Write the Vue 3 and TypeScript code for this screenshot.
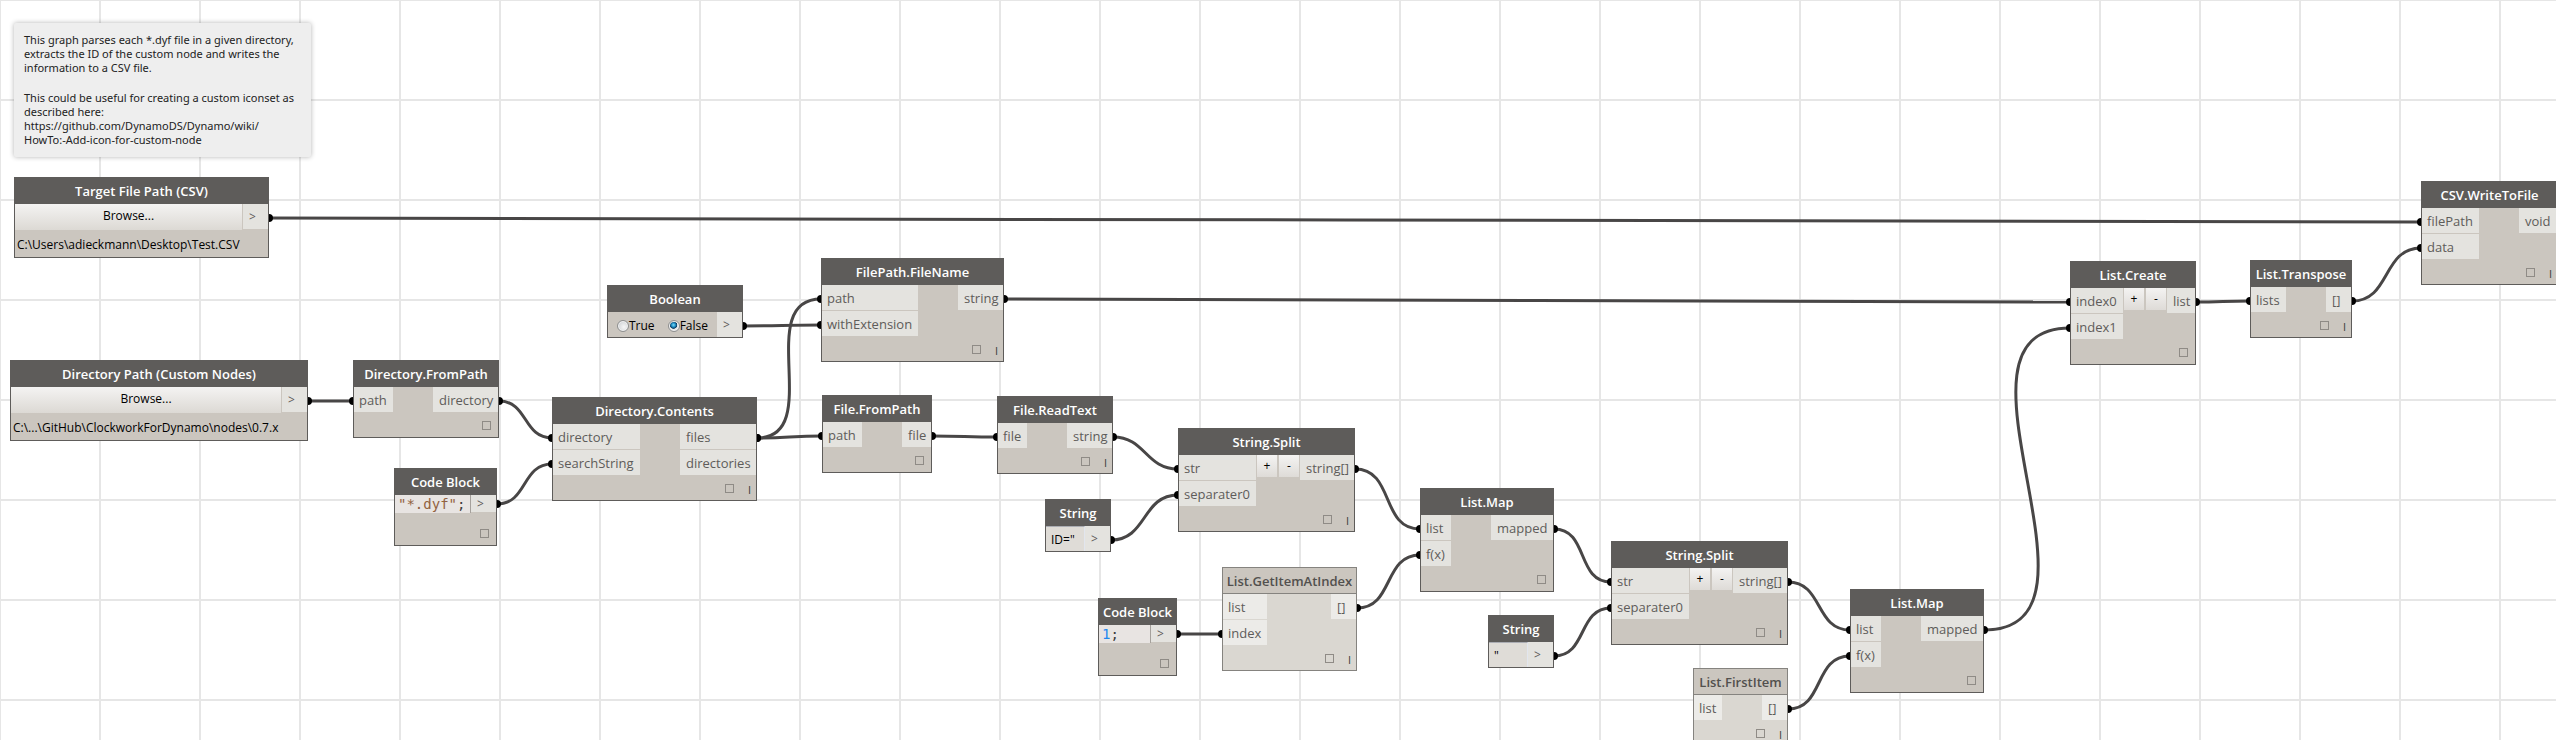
<script setup lang="ts">
import { reactive } from 'vue'

type Kind = 'function' | 'browse' | 'boolean' | 'string' | 'code'

interface GraphNode {
  id: string
  kind: Kind
  title: string
  x: number
  y: number
  width: number
  inputs?: string[]
  inputWidth?: number
  outputs?: string[]
  outputWidth?: number
  variadic?: boolean
  lacing?: boolean
  partial?: boolean
  value?: string
  tokens?: { text: string; type: string }[]
}

interface Wire {
  from: string
  to: string
  port: number
}

const nodes = reactive<GraphNode[]>([
  { id: 'target', kind: 'browse', title: 'Target File Path (CSV)', x: 14, y: 177, width: 255, value: 'C:\\Users\\adieckmann\\Desktop\\Test.CSV' },
  { id: 'source', kind: 'browse', title: 'Directory Path (Custom Nodes)', x: 10, y: 360, width: 298, value: 'C:\\...\\GitHub\\ClockworkForDynamo\\nodes\\0.7.x' },
  { id: 'dirFrom', kind: 'function', title: 'Directory.FromPath', x: 353, y: 360, width: 146, inputs: ['path'], inputWidth: 39, outputs: ['directory'], outputWidth: 65 },
  { id: 'pattern', kind: 'code', title: 'Code Block', x: 394, y: 468, width: 103, tokens: [{ text: '"*.dyf"', type: 'literal' }, { text: ';', type: 'mark' }] },
  { id: 'contents', kind: 'function', title: 'Directory.Contents', x: 552, y: 397, width: 205, inputs: ['directory', 'searchString'], inputWidth: 87, outputs: ['files', 'directories'], outputWidth: 76, lacing: true },
  { id: 'bool', kind: 'boolean', title: 'Boolean', x: 607, y: 285, width: 136, value: 'False' },
  { id: 'fileName', kind: 'function', title: 'FilePath.FileName', x: 821, y: 258, width: 183, inputs: ['path', 'withExtension'], inputWidth: 96, outputs: ['string'], outputWidth: 45, lacing: true },
  { id: 'fileFrom', kind: 'function', title: 'File.FromPath', x: 822, y: 395, width: 110, inputs: ['path'], inputWidth: 39, outputs: ['file'], outputWidth: 29 },
  { id: 'readText', kind: 'function', title: 'File.ReadText', x: 997, y: 396, width: 116, inputs: ['file'], inputWidth: 29, outputs: ['string'], outputWidth: 45, lacing: true },
  { id: 'idText', kind: 'string', title: 'String', x: 1045, y: 499, width: 66, value: 'ID="' },
  { id: 'split1', kind: 'function', title: 'String.Split', x: 1178, y: 428, width: 177, inputs: ['str', 'separater0'], inputWidth: 77, outputs: ['string[]'], outputWidth: 54, variadic: true, lacing: true },
  { id: 'one', kind: 'code', title: 'Code Block', x: 1098, y: 598, width: 79, tokens: [{ text: '1', type: 'number' }, { text: ';', type: 'mark' }] },
  { id: 'getItem', kind: 'function', title: 'List.GetItemAtIndex', x: 1222, y: 567, width: 135, inputs: ['list', 'index'], inputWidth: 44, outputs: ['[]'], outputWidth: 25, lacing: true, partial: true },
  { id: 'map1', kind: 'function', title: 'List.Map', x: 1420, y: 488, width: 134, inputs: ['list', 'f(x)'], inputWidth: 30, outputs: ['mapped'], outputWidth: 62 },
  { id: 'quote', kind: 'string', title: 'String', x: 1488, y: 615, width: 66, value: '"' },
  { id: 'split2', kind: 'function', title: 'String.Split', x: 1611, y: 541, width: 177, inputs: ['str', 'separater0'], inputWidth: 77, outputs: ['string[]'], outputWidth: 54, variadic: true, lacing: true },
  { id: 'firstItem', kind: 'function', title: 'List.FirstItem', x: 1693, y: 668, width: 95, inputs: ['list'], inputWidth: 28, outputs: ['[]'], outputWidth: 25, lacing: true, partial: true },
  { id: 'map2', kind: 'function', title: 'List.Map', x: 1850, y: 589, width: 134, inputs: ['list', 'f(x)'], inputWidth: 30, outputs: ['mapped'], outputWidth: 62 },
  { id: 'create', kind: 'function', title: 'List.Create', x: 2070, y: 261, width: 126, inputs: ['index0', 'index1'], inputWidth: 52, outputs: ['list'], outputWidth: 28, variadic: true },
  { id: 'transpose', kind: 'function', title: 'List.Transpose', x: 2250, y: 260, width: 102, inputs: ['lists'], inputWidth: 35, outputs: ['[]'], outputWidth: 25, lacing: true },
  { id: 'write', kind: 'function', title: 'CSV.WriteToFile', x: 2421, y: 181, width: 137, inputs: ['filePath', 'data'], inputWidth: 57, outputs: ['void'], outputWidth: 38, lacing: true },
])

const wires: Wire[] = [
  { from: 'target', to: 'write', port: 0 },
  { from: 'source', to: 'dirFrom', port: 0 },
  { from: 'dirFrom', to: 'contents', port: 0 },
  { from: 'pattern', to: 'contents', port: 1 },
  { from: 'bool', to: 'fileName', port: 1 },
  { from: 'contents', to: 'fileName', port: 0 },
  { from: 'contents', to: 'fileFrom', port: 0 },
  { from: 'fileFrom', to: 'readText', port: 0 },
  { from: 'readText', to: 'split1', port: 0 },
  { from: 'idText', to: 'split1', port: 1 },
  { from: 'split1', to: 'map1', port: 0 },
  { from: 'one', to: 'getItem', port: 1 },
  { from: 'getItem', to: 'map1', port: 1 },
  { from: 'map1', to: 'split2', port: 0 },
  { from: 'quote', to: 'split2', port: 1 },
  { from: 'split2', to: 'map2', port: 0 },
  { from: 'firstItem', to: 'map2', port: 1 },
  { from: 'map2', to: 'create', port: 1 },
  { from: 'fileName', to: 'create', port: 0 },
  { from: 'create', to: 'transpose', port: 0 },
  { from: 'transpose', to: 'write', port: 1 },
]

const PORT_TOP = 41
const CODE_PORT_TOP = 36
const PORT_STEP = 26

const curves = wires.map((wire) => {
  const a = nodes.find((n) => n.id === wire.from)!
  const b = nodes.find((n) => n.id === wire.to)!
  const x1 = a.x + a.width
  const y1 = a.y + (a.kind === 'code' ? CODE_PORT_TOP : PORT_TOP)
  const x2 = b.x
  const y2 = b.y + PORT_TOP + wire.port * PORT_STEP
  const bend = Math.hypot(x2 - x1, y2 - y1) * 0.45
  return { x1, y1, x2, y2, d: `M${x1} ${y1}C${x1 + bend} ${y1} ${x2 - bend} ${y2} ${x2} ${y2}` }
})
</script>

<template>
  <main class="workspace">
    <aside class="note">
      <p>This graph parses each *.dyf file in a given directory,<br />extracts the ID of the custom node and writes the<br />information to a CSV file.</p>
      <p>This could be useful for creating a custom iconset as<br />described here:<br />https://github.com/DynamoDS/Dynamo/wiki/<br />HowTo:-Add-icon-for-custom-node</p>
    </aside>

    <svg class="wires" aria-hidden="true">
      <g v-for="(c, i) in curves" :key="i">
        <path :d="c.d" />
        <circle :cx="c.x1" :cy="c.y1" r="4" />
        <circle :cx="c.x2" :cy="c.y2" r="4" />
      </g>
    </svg>

    <section
      v-for="node in nodes"
      :key="node.id"
      class="node"
      :class="['node-' + node.kind, { partial: node.partial }]"
      :style="{ left: node.x + 'px', top: node.y + 'px', width: node.width + 'px' }"
    >
      <h2 class="title">{{ node.title }}</h2>

      <div v-if="node.kind === 'function'" class="row">
        <ul class="ports" :style="{ width: node.inputWidth + 'px' }">
          <li v-for="p in node.inputs" :key="p" class="port">{{ p }}</li>
        </ul>
        <template v-if="node.variadic">
          <button type="button" class="step" aria-label="Add input">+</button>
          <button type="button" class="step" aria-label="Remove input">-</button>
        </template>
        <ul class="ports out" :style="{ width: node.outputWidth + 'px' }">
          <li v-for="p in node.outputs" :key="p" class="port">{{ p }}</li>
        </ul>
      </div>

      <template v-else-if="node.kind === 'browse'">
        <div class="row">
          <button type="button" class="browse">Browse...</button>
          <span class="port arrow">&gt;</span>
        </div>
        <div class="file-path">{{ node.value }}</div>
      </template>

      <div v-else-if="node.kind === 'boolean'" class="row">
        <div class="choices">
          <label><input v-model="node.value" type="radio" :name="node.id" value="True" />True</label>
          <label><input v-model="node.value" type="radio" :name="node.id" value="False" />False</label>
        </div>
        <span class="port arrow">&gt;</span>
      </div>

      <div v-else-if="node.kind === 'string'" class="row">
        <input v-model="node.value" class="text" type="text" :aria-label="node.title" />
        <span class="port arrow">&gt;</span>
      </div>

      <div v-else class="row">
        <code class="source"><span v-for="t in node.tokens" :key="t.text" :class="t.type">{{ t.text }}</span></code>
        <span class="port arrow">&gt;</span>
      </div>

      <footer v-if="node.kind === 'function' || node.kind === 'code'" class="foot" :class="{ laced: node.lacing }">
        <span class="preview"></span>
        <span v-if="node.lacing" class="lacing">I</span>
      </footer>
    </section>
  </main>
</template>

<style>
body {
  margin: 0;
}
</style>

<style scoped>
.workspace {
  position: relative;
  min-height: 100vh;
  overflow: hidden;
  background-color: #ffffff;
  background-image: linear-gradient(#e6e6e6 2px, transparent 2px), linear-gradient(90deg, #e6e6e6 2px, transparent 2px);
  background-size: 100px 100px;
  background-position: -1px -1px;
  font: 13px/25px 'Open Sans', 'Noto Sans', sans-serif;
  color: #5e5c5a;
}

.note {
  position: absolute;
  left: 14px;
  top: 23px;
  box-sizing: border-box;
  width: 297px;
  padding: 10px;
  border-radius: 2px;
  background: #eeeeee;
  box-shadow: 0 0 5px rgba(0, 0, 0, 0.3);
  font: 11px/14px 'Noto Sans', 'Open Sans', sans-serif;
  color: #222222;
  white-space: nowrap;
}

.note p {
  margin: 0;
}

.note p + p {
  margin-top: 16px;
}

.wires {
  position: absolute;
  inset: 0;
  width: 100%;
  height: 100%;
}

.wires path {
  fill: none;
  stroke: #484646;
  stroke-width: 3px;
}

.wires circle {
  fill: #000000;
}

.node {
  position: absolute;
  box-sizing: border-box;
  border: 1px solid #5e5c5a;
  background: #cbc6bf;
}

.title {
  box-sizing: border-box;
  height: 26px;
  margin: 0;
  border-bottom: 1px solid #5e5c5a;
  background: #5e5c5a;
  color: #ffffff;
  font-size: 13px;
  font-weight: 600;
  line-height: 27px;
  text-align: center;
  white-space: nowrap;
}

.row {
  display: flex;
  align-items: flex-start;
}

.ports {
  display: flex;
  flex-direction: column;
  flex: none;
  gap: 1px;
  margin: 0;
  padding: 0;
  list-style: none;
}

.ports.out {
  margin-left: auto;
}

.port {
  box-sizing: border-box;
  height: 25px;
  padding-left: 5px;
  background: #e4e3df;
  line-height: 26px;
  white-space: nowrap;
}

.ports.out .port {
  padding-left: 6px;
}

.arrow {
  flex: none;
  width: 25px;
  padding-left: 6px;
  font-size: 12px;
}

.step {
  flex: none;
  width: 20px;
  height: 22px;
  margin: 0 1px;
  padding: 0;
  border: 0;
  background: linear-gradient(#f4f3f2, #dedbd7);
  color: #000000;
  font: 12px/22px 'Open Sans', 'Noto Sans', sans-serif;
}

.browse {
  flex: 1;
  height: 26px;
  margin-right: 1px;
  padding: 0 0 2px;
  border: 0;
  background: linear-gradient(#f4f3f2, #dcd9d4);
  color: #000000;
  font: 12px/24px 'Open Sans', 'Noto Sans', sans-serif;
}

.file-path {
  height: 27px;
  padding-left: 2px;
  color: #000000;
  font-size: 12px;
  line-height: 29px;
  white-space: nowrap;
}

.choices {
  display: flex;
  flex: 1;
  gap: 13px;
  padding-left: 9px;
  color: #000000;
  font-size: 12px;
}

.choices label {
  display: flex;
  box-sizing: border-box;
  align-items: center;
  height: 25px;
  padding-top: 2px;
}

.choices input {
  appearance: none;
  width: 12px;
  height: 12px;
  margin: 0;
  border: 1px solid #8e8f8f;
  border-radius: 50%;
  background: radial-gradient(circle at 60% 60%, #f6f6f6, #c4c8cc);
  box-shadow: inset 0 0 0 1px #f2f2f2;
}

.choices input:checked {
  background: radial-gradient(circle at 45% 40%, #7fdcf8 0, #1c8cc4 25%, #0c3a60 42%, #e4e6e8 50%);
}

.text {
  box-sizing: border-box;
  flex: 1;
  min-width: 0;
  height: 25px;
  padding: 1px 0 0 5px;
  border: 0;
  border-top: 1px solid #abadb3;
  border-right: 1px solid #e2e6ee;
  border-radius: 0;
  background: #dfdcd7;
  color: #000000;
  font: 12px/23px 'Open Sans', 'Noto Sans', sans-serif;
}

.source {
  flex: 1;
  height: 18px;
  padding-left: 3px;
  border-right: 1px solid #a5a19c;
  background: #e8e4e2;
  font: 14px/19px 'DejaVu Sans Mono', monospace;
}

.literal {
  color: #92623f;
}

.number {
  color: #1e88f0;
}

.mark {
  color: #3c3c3c;
}

.node-code .port {
  height: 17px;
  line-height: 17px;
}

.foot {
  display: flex;
  box-sizing: border-box;
  align-items: flex-end;
  justify-content: flex-end;
  height: 25px;
  padding: 0 7px 7px 0;
}

.foot.laced {
  padding-right: 0;
}

.node-code .foot {
  height: 32px;
}

.preview {
  box-sizing: border-box;
  width: 9px;
  height: 9px;
  border: 1px solid #8f8b86;
}

.lacing {
  box-sizing: border-box;
  width: 22px;
  height: 9px;
  padding-left: 14px;
  color: #3c3a38;
  font-size: 11px;
  line-height: 11px;
}

.partial {
  border-color: #85837f;
  background: #dad7d1;
}

.partial .title {
  border-bottom-color: #85837f;
  background: #cbc6bf;
  color: #52504e;
}

.partial .port {
  background: #ecebe8;
}
</style>
